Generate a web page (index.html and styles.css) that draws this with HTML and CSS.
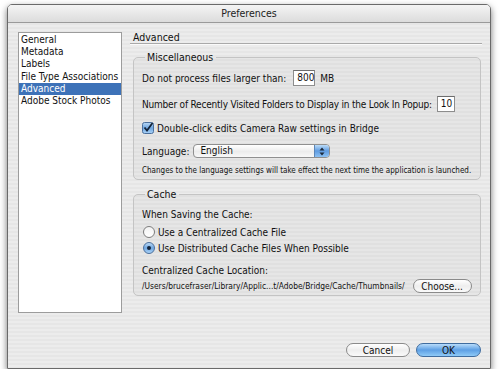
FILE: index.html
```html
<!DOCTYPE html>
<html lang="en">
<head>
  <meta charset="UTF-8" />
  <title>Preferences</title>
  <link rel="stylesheet" href="styles.css">
</head>
<body>
  <div class="window">
    <div class="titlebar">Preferences</div>
    <div class="content">
      <ul class="sidebar">
        <li>General</li>
        <li>Metadata</li>
        <li>Labels</li>
        <li>File Type Associations</li>
        <li class="selected">Advanced</li>
        <li>Adobe Stock Photos</li>
      </ul>

      <div class="pane">
        <div class="pane-title">Advanced</div>

        <fieldset class="group misc">
          <legend>Miscellaneous</legend>
          <div class="row r1">
            <span>Do not process files larger than:</span>
            <span class="field w-800">800</span>
            <span>MB</span>
          </div>
          <div class="row r2">
            <span class="tight">Number of Recently Visited Folders to Display in the Look In Popup:</span>
            <span class="field w-10">10</span>
          </div>
          <div class="row r3">
            <svg class="check" width="12" height="12" viewBox="0 0 12 12">
              <defs>
                <linearGradient id="aqua" x1="0" y1="0" x2="0" y2="1">
                  <stop offset="0" stop-color="#b9d8f5"/>
                  <stop offset="0.5" stop-color="#6fa6e0"/>
                  <stop offset="1" stop-color="#a9d2f7"/>
                </linearGradient>
              </defs>
              <rect x="0.5" y="0.5" width="11" height="11" rx="2" fill="url(#aqua)" stroke="#4b6f9c"/>
              <path d="M2.5 5.5 L5 8.5 L10.5 1" fill="none" stroke="#142338" stroke-width="1.8"/>
            </svg>
            <span>Double-click edits Camera Raw settings in Bridge</span>
          </div>
          <div class="row r4">
            <span>Language:</span>
            <span class="popup">
              <span class="popup-label">English</span>
              <span class="stepper">
                <svg width="6" height="9" viewBox="0 0 6 9">
                  <path d="M0.5 3.5 L3 0.5 L5.5 3.5 Z M0.5 5.5 L3 8.5 L5.5 5.5 Z" fill="#1d2b3c"/>
                </svg>
              </span>
            </span>
          </div>
          <div class="row r5 note">Changes to the language settings will take effect the next time the application is launched.</div>
        </fieldset>

        <fieldset class="group cache">
          <legend>Cache</legend>
          <div class="row c1">When Saving the Cache:</div>
          <div class="row c2">
            <span class="radio"></span>
            <span>Use a Centralized Cache File</span>
          </div>
          <div class="row c3">
            <span class="radio on"></span>
            <span>Use Distributed Cache Files When Possible</span>
          </div>
          <div class="row c4">Centralized Cache Location:</div>
          <div class="row c5">
            <span class="path">/Users/brucefraser/Library/Applic...t/Adobe/Bridge/Cache/Thumbnails/</span>
            <span class="button choose">Choose...</span>
          </div>
        </fieldset>

        <div class="buttons">
          <span class="button cancel">Cancel</span>
          <span class="button ok">OK</span>
        </div>
      </div>
    </div>
  </div>
</body>
</html>
```

FILE: styles.css
```css
body, html {
  margin: 0;
  padding: 0;
  background: #fff;
  font-family: 'DejaVu Sans Condensed', 'DejaVu Sans', sans-serif;
  font-size: 10px;
  color: #111;
}
.window {
  margin: 4px 0 0 7px;
  width: 484px;
  height: 365px;
  box-sizing: border-box;
  border: 1px solid #6a6a6a;
  border-radius: 5px 5px 0 0;
  box-shadow: 0 3px 7px rgba(0, 0, 0, 0.55);
  background: repeating-linear-gradient(to bottom, #ececec 0, #ececec 2px, #e6e6e6 2px, #e6e6e6 4px);
  display: flex;
  flex-direction: column;
  overflow: hidden;
}
.titlebar {
  height: 17px;
  line-height: 17px;
  text-align: center;
  font-size: 10.5px;
  color: #222;
  background: linear-gradient(to bottom, #f4f4f4, #dcdcdc);
  border-bottom: 1px solid #9a9a9a;
}
.content {
  flex: 1;
  display: flex;
  gap: 8px;
  padding: 9px 8px 11px 10px;
}
.sidebar {
  flex: none;
  list-style: none;
  margin: 0;
  padding: 1px 0 0 0;
  width: 104px;
  height: 281px;
  box-sizing: border-box;
  background: #fff;
  border: 1px solid #9c9c9c;
  overflow: hidden;
}
.sidebar li {
  height: 12.2px;
  line-height: 12.2px;
  padding-left: 2px;
  white-space: nowrap;
}
.sidebar li.selected {
  background: #3d72b8;
  color: #fff;
}
.pane {
  flex: none;
  width: 352px;
  min-width: 0;
  display: flex;
  flex-direction: column;
}
.pane-title {
  height: 11px;
  line-height: 11px;
  padding-left: 3px;
  border-bottom: 1px solid #a9a9a9;
  box-shadow: 0 1px 0 #fafafa;
  font-size: 10.5px;
}
.group {
  margin: 0 1px 0 3px;
  padding: 0 8px;
  min-width: 0;
  border: 1px solid #c4c4c4;
  border-radius: 5px;
  background: rgba(0, 0, 0, 0.025);
}
.group legend {
  padding: 0 3px 0 2px;
  margin-left: 3px;
  height: 14px;
  line-height: 14px;
  font-size: 10.5px;
}
.misc {
  margin-top: 6px;
  padding-top: 6px;
  padding-bottom: 3px;
}
.row {
  display: flex;
  align-items: center;
  gap: 5px;
  white-space: nowrap;
}
.tight { letter-spacing: -0.2px; }
.r1 { height: 16px; }
.r2 { height: 16px; margin-top: 10px; }
.r3 { height: 12px; margin-top: 10px; gap: 3px; }
.r4 { height: 14px; margin-top: 10px; gap: 4px; }
.r5 { height: 12px; margin-top: 6px; }
.note {
  font-size: 8px;
}
.field {
  display: inline-block;
  box-sizing: border-box;
  height: 16px;
  line-height: 14px;
  padding-left: 3px;
  background: #fff;
  border: 1px solid #8d8d8d;
  border-top-color: #6d6d6d;
}
.w-800 { width: 22px; margin-left: 2px; }
.w-10 { width: 18px; }
.popup {
  display: flex;
  align-items: center;
  width: 137px;
  height: 14px;
  box-sizing: border-box;
  border: 1px solid #8f8f8f;
  border-radius: 4px;
  background: linear-gradient(to bottom, #ffffff, #ececec 55%, #f8f8f8);
  overflow: hidden;
}
.popup-label {
  flex: 1;
  padding-left: 6px;
  line-height: 12px;
}
.stepper {
  width: 14px;
  height: 12px;
  display: flex;
  align-items: center;
  justify-content: center;
  border-left: 1px solid #5c86b8;
  background: linear-gradient(to bottom, #bcdcf8, #5f9be0 50%, #8cc1f3);
}
.cache {
  margin-top: 7px;
  padding-top: 6px;
  padding-bottom: 2px;
}
.c1 { height: 14px; }
.c2 { height: 12px; margin-top: 5px; gap: 3px; }
.c3 { height: 12px; margin-top: 4px; gap: 3px; }
.c4 { height: 14px; margin-top: 9px; }
.c5 { height: 14px; margin-top: 2px; gap: 8px; }
.radio {
  display: inline-block;
  width: 10px;
  height: 10px;
  border-radius: 50%;
  border: 1px solid #7d7d7d;
  background: linear-gradient(to bottom, #f2f2f2, #ffffff);
  margin-left: 1px;
  position: relative;
}
.radio.on {
  border-color: #4b6f9c;
  background: linear-gradient(to bottom, #b9d8f5, #6fa6e0 50%, #a9d2f7);
}
.radio.on::after {
  content: '';
  position: absolute;
  left: 3px;
  top: 3px;
  width: 4px;
  height: 4px;
  border-radius: 50%;
  background: #142338;
}
.path {
  font-size: 8.4px;
}
.button {
  display: inline-flex;
  align-items: center;
  justify-content: center;
  box-sizing: border-box;
  height: 14px;
  border: 1px solid #8a8a8a;
  border-radius: 7px;
  background: linear-gradient(to bottom, #ffffff, #eeeeee 50%, #fafafa);
  font-size: 10px;
}
.choose { width: 59px; }
.buttons {
  margin-top: auto;
  display: flex;
  justify-content: flex-end;
  gap: 6px;
  padding-right: 1px;
}
.cancel { width: 64px; }
.ok {
  width: 65px;
  border-color: #3f6c9f;
  background: linear-gradient(to bottom, #b8dcfb, #5d9fe4 50%, #8fcaf7);
}
```
